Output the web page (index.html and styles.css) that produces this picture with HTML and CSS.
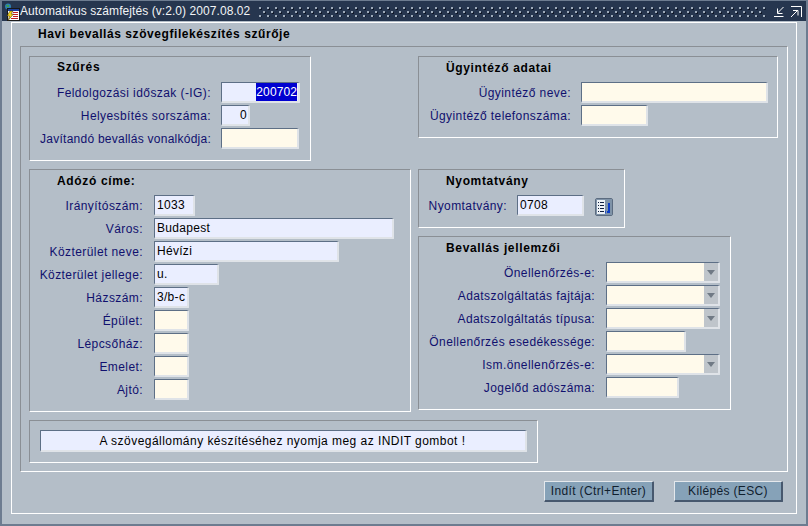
FILE: index.html
```html
<!DOCTYPE html>
<html lang="hu">
<head>
<meta charset="utf-8">
<title>Automatikus számfejtés</title>
<link rel="stylesheet" href="styles.css">
</head>
<body>
<div class="window">
  <header class="titlebar">
    <svg class="appicon" width="16" height="18" viewBox="0 0 16 18"><circle cx="4" cy="3.500" r="3" fill="#2f7fb0"/><path d="M2 2h3v2H3z" fill="#3fa04a"/><rect x="3.500" y="5.500" width="12" height="12" fill="#fff" stroke="#181818"/><rect x="4" y="6" width="11" height="2" fill="#1c3f9c"/><path d="M9 9.500h5M9 11.500h5M9 13.500h5M7 15.500h7" stroke="#c02020"/><path d="M6 8l3 0-2 3 2.500 0L4 17.500l1.500-4.500-2.500 0z" fill="#f6d81c" stroke="#302000" stroke-width=".5"/></svg>
    <span class="title">Automatikus számfejtés (v:2.0) 2007.08.02</span>
    <svg class="grip" height="10" aria-hidden="true">
      <defs>
        <pattern id="dots" width="8" height="8" patternUnits="userSpaceOnUse">
          <rect x="1" y="1" width="2" height="2" fill="#10192a"/><rect x="0" y="0" width="2" height="2" fill="#9eabba"/>
          <rect x="5" y="5" width="2" height="2" fill="#10192a"/><rect x="4" y="4" width="2" height="2" fill="#9eabba"/>
        </pattern>
      </defs>
      <rect width="100%" height="100%" fill="url(#dots)"/>
    </svg>
    <svg class="winbtn" width="11" height="12" viewBox="0 0 11 12"><path d="M0 10.500h9.500M9.500 1l-6 6M3.500 2.500v5h5" fill="none" stroke="#fff"/></svg>
    <svg class="winbtn gap" width="12" height="12" viewBox="0 0 12 12"><path d="M1 .500h10.500V11M1 11l6-6M3 4.500h5v5" fill="none" stroke="#fff"/></svg>
  </header>
  <main class="panel">
    <h1 class="heading">Havi bevallás szövegfilekészítés szűrője</h1>
    <section class="outer">
      <div class="columns">
        <fieldset class="frame szures">
          <h2 class="cap">Szűrés</h2>
          <div class="row"><label class="lb w181">Feldolgozási időszak (-IG):</label><span class="in blue r w79"><mark class="sel">200702</mark></span></div>
          <div class="row"><label class="lb w181">Helyesbítés sorszáma:</label><span class="in blue r w28">0</span></div>
          <div class="row"><label class="lb w181 tight">Javítandó bevallás vonalkódja:</label><span class="in cream w78"></span></div>
        </fieldset>
        <fieldset class="frame ugy">
          <h2 class="cap">Ügyintéző adatai</h2>
          <div class="row"><label class="lb w152">Ügyintéző neve:</label><span class="in cream w186"></span></div>
          <div class="row"><label class="lb w152">Ügyintéző telefonszáma:</label><span class="in cream w66"></span></div>
        </fieldset>
        <fieldset class="frame cim">
          <h2 class="cap">Adózó címe:</h2>
          <div class="row"><label class="lb w115">Irányítószám:</label><span class="in blue w41">1033</span></div>
          <div class="row"><label class="lb w115">Város:</label><span class="in blue w240">Budapest</span></div>
          <div class="row"><label class="lb w115">Közterület neve:</label><span class="in blue w185">Hévízi</span></div>
          <div class="row"><label class="lb w115">Közterület jellege:</label><span class="in blue w65">u.</span></div>
          <div class="row"><label class="lb w115">Házszám:</label><span class="in blue w35">3/b-c</span></div>
          <div class="row"><label class="lb w115">Épület:</label><span class="in cream w35"></span></div>
          <div class="row"><label class="lb w115">Lépcsőház:</label><span class="in cream w35"></span></div>
          <div class="row"><label class="lb w115">Emelet:</label><span class="in cream w35"></span></div>
          <div class="row"><label class="lb w115">Ajtó:</label><span class="in cream w35"></span></div>
        </fieldset>
        <div class="stack">
          <fieldset class="frame nyom">
            <h2 class="cap">Nyomtatvány</h2>
            <div class="row"><label class="lb w89">Nyomtatvány:</label><span class="in blue w66">0708</span>
              <button class="lov" type="button" aria-label="Lista"><svg width="18" height="18" viewBox="0 0 18 18"><rect x="1" y="1" width="16" height="16" fill="#7f93a8"/><rect x="2" y="2" width="8" height="14" fill="#eef2f6"/><path d="M3 4.500h1M5 4.500h4M3 7.500h1M5 7.500h4M3 10.500h1M5 10.500h4M3 13.500h1M5 13.500h4" stroke="#102040" fill="none"/><path d="M14 5v9h-2" stroke="#0c3cc8" stroke-width="2" fill="none"/><path d="M11 12v4l-1-2z" fill="#0c3cc8"/></svg></button>
            </div>
          </fieldset>
          <fieldset class="frame jell">
            <h2 class="cap">Bevallás jellemzői</h2>
            <div class="row"><label class="lb w177">Önellenőrzés-e:</label><span class="in cream w114 combo"></span></div>
            <div class="row"><label class="lb w177">Adatszolgáltatás fajtája:</label><span class="in cream w114 combo"></span></div>
            <div class="row"><label class="lb w177">Adatszolgáltatás típusa:</label><span class="in cream w114 combo"></span></div>
            <div class="row"><label class="lb w177">Önellenőrzés esedékessége:</label><span class="in cream w80"></span></div>
            <div class="row"><label class="lb w177">Ism.önellenőrzés-e:</label><span class="in cream w114 combo"></span></div>
            <div class="row"><label class="lb w177">Jogelőd adószáma:</label><span class="in cream w73"></span></div>
          </fieldset>
        </div>
      </div>
      <fieldset class="frame msg"><div class="in blue msgtext">A szövegállomány készítéséhez nyomja meg az INDIT gombot !</div></fieldset>
    </section>
    <footer class="actions">
      <button class="btn wide" type="button">Indít (Ctrl+Enter)</button>
      <button class="btn" type="button">Kilépés (ESC)</button>
    </footer>
  </main>
</div>
</body>
</html>
```
FILE: styles.css
```css
* { box-sizing: border-box; }
html, body { margin: 0; padding: 0; }
body { width: 808px; height: 526px; overflow: hidden; background: #b4bec8; font: 12px/1 "Liberation Sans", Arial, sans-serif; }
.window { width: 808px; height: 526px; display: flex; flex-direction: column; background: #b4bec8; border: solid #6d7c90; border-width: 1px 2px 2px 2px; }
.titlebar { height: 20px; flex: none; display: flex; align-items: center; background: #26364f; color: #f2f4f6; padding-right: 4px; }
.appicon { flex: none; margin: 1px 0 0 2px; }
.title { margin-left: 0; font-size: 12px; letter-spacing: .07px; white-space: nowrap; }
.grip { flex: 1; min-width: 0; height: 10px; margin: 1px 8px 0 9px; }
.winbtn { flex: none; margin-top: 1px; }
.winbtn.gap { margin-left: 5px; }
.panel { margin: 1px 0 0 9px; height: 492px; width: 786px; border: 1px solid #fff; padding: 0 0 0 8px; display: flex; flex-direction: column; }
.heading { margin: 0 0 0 18px; height: 23px; padding-top: 5px; font-size: 12px; font-weight: bold; color: #000; letter-spacing: .57px; white-space: nowrap; }
.outer { width: 768px; height: 426px; flex: none; border-style: solid; border-color: #8a8f95 #fff #fff #8a8f95; border-width: 1px; padding: 9px 0 0 8px; }
.frame { margin: 0; padding: 0; min-width: 0; border-style: solid; border-color: #8a8f95 #fff #fff #8a8f95; border-width: 1px; }
.columns { display: grid; grid-template-columns: 381px 359px; column-gap: 8px; grid-template-rows: 105px 243px; row-gap: 8px; }
.szures { width: 282px; height: 105px; }
.ugy { width: 360px; height: 82px; }
.cim { width: 382px; height: 243px; }
.stack { display: flex; flex-direction: column; gap: 8px; align-items: flex-start; }
.nyom { width: 207px; height: 59px; }
.jell { width: 313px; height: 174px; }
.cap { margin: 0 0 0 27px; height: 24px; padding-top: 5px; font-size: 12px; font-weight: bold; color: #000; letter-spacing: .65px; white-space: nowrap; }
.szures .cap { padding-top: 4px; }
.row { display: flex; align-items: center; height: 23px; }
.lb { flex: none; display: block; color: #10106e; text-align: right; padding-right: 10px; white-space: nowrap; letter-spacing: .42px; }
.tight { letter-spacing: .25px; }
.w181 { width: 191px; }
.w152 { width: 162px; }
.w115 { width: 124px; padding-right: 11px; }
.w89 { width: 98px; }
.w177 { width: 187px; padding-right: 11px; }
.in { flex: none; display: block; height: 21px; line-height: 19px; padding: 0 3px 0 2px; color: #000; letter-spacing: .3px; white-space: nowrap; border-style: solid; border-width: 1px 2px 2px 1px; border-color: #5d6f86 #dfe3e8 #dfe3e8 #5d6f86; border-radius: 1px; position: relative; }
.blue { background: #eaeeff; }
.cream { background: #fffaeb; }
.r { text-align: right; padding-right: 1px; }
.sel { background: #0000d0; color: #fff; padding: 0; display: inline-block; line-height: 18px; vertical-align: top; letter-spacing: .1px; }
.w79 { width: 79px; }
.w78 { width: 78px; }
.w28 { width: 29px; }
.w186 { width: 187px; }
.w66 { width: 67px; }
.w41 { width: 41px; }
.w240 { width: 240px; }
.w185 { width: 185px; }
.w65 { width: 65px; }
.w35 { width: 35px; }
.w114 { width: 114px; }
.w80 { width: 80px; }
.w73 { width: 73px; }
.combo::after { content: ""; position: absolute; top: 0; right: 0; bottom: 0; width: 14px; background: #bfc5cb; }
.combo::before { content: ""; position: absolute; z-index: 1; top: 7px; right: 3px; border: 4px solid transparent; border-top: 5px solid #707a85; border-bottom: 0; }
.lov { flex: none; width: 18px; height: 18px; margin: 2px 0 0 11px; padding: 0; border: 1px solid #5c6c80; background: #8397ab; border-radius: 2px; }
.lov svg { display: block; margin: -1px; }
.msg { width: 509px; height: 43px; margin-top: 8px; padding: 9px 0 0 10px; }
.msgtext { width: 487px; height: 22px; text-align: center; line-height: 20px; letter-spacing: .46px; }
.actions { display: flex; justify-content: flex-end; gap: 20px; margin-top: 9px; width: 763px; }
.btn { width: 109px; height: 21px; padding: 0; font: 12px "Liberation Sans", Arial, sans-serif; letter-spacing: .35px; color: #10202e; background: #86a2b8; border-style: solid; border-width: 1px 2px 2px 1px; border-color: #e4e8ec #47586e #47586e #e4e8ec; border-radius: 1px; }
.wide { width: 110px; }
```
